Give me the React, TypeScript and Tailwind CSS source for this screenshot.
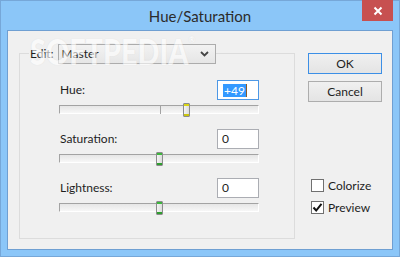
import React from "react";

const font = { fontFamily: 'Lato, "Noto Sans", Arial, sans-serif' };

function Slider({ pos, cap, tick }: { pos: number; cap: "yellow" | "green"; tick?: boolean }) {
  return (
    <div className="relative mt-[5px] h-[9px] w-[200px] border-l border-t border-[#a3a3a3] border-b-white border-r-white border-b border-r bg-gradient-to-b from-[#e6e6e6] to-[#f7f7f7]">
      {tick && <div className="absolute left-[100px] top-0 h-[8px] w-px bg-[#a3a3a3]" />}
      <div
        className="absolute top-[-3px] flex h-[14px] w-[7px] flex-col justify-between rounded-[1px] border border-[#8c8c8c] bg-gradient-to-r from-[#f4f4f4] to-[#dcdcdc]"
        style={{ left: pos - 4 }}
      >
        <div className={cap === "yellow" ? "h-[2px] bg-[#d8d414]" : "h-[2px] bg-[#3db53d]"} />
        <div className={cap === "yellow" ? "h-[2px] bg-[#c9c40f]" : "h-[2px] bg-[#2f9e2f]"} />
      </div>
    </div>
  );
}

function Row({
  label,
  value,
  pos,
  cap,
  tick,
  focused,
}: {
  label: string;
  value: string;
  pos: number;
  cap: "yellow" | "green";
  tick?: boolean;
  focused?: boolean;
}) {
  return (
    <div className="flex flex-col">
      <div className="flex h-[20px] w-[200px] items-center justify-between">
        <span className="pl-[1px]">{label}</span>
        <div
          className={
            focused
              ? "flex h-[20px] w-[42px] items-center border border-[#4d98e6] bg-white pl-[5px]"
              : "flex h-[20px] w-[42px] items-center border border-[#abadb3] bg-white pl-[4px]"
          }
        >
          {focused ? (
            <span className="flex items-center">
              <span className="bg-[#3399ff] px-[1px] leading-[13px] text-white">{value}</span>
              <span className="h-[13px] w-px bg-[#8a5a2a]" />
            </span>
          ) : (
            <span>{value}</span>
          )}
        </div>
      </div>
      <Slider pos={pos} cap={cap} tick={tick} />
    </div>
  );
}

function Check({ label, checked }: { label: string; checked?: boolean }) {
  return (
    <div className="flex h-[13px] items-center gap-[4px]">
      <div className="flex h-[13px] w-[13px] items-center justify-center border border-[#707070] bg-white">
        {checked && (
          <svg width="11" height="11" viewBox="0 0 11 11">
            <path d="M1.5 5.5 L4.2 8.5 L9.5 1.8" fill="none" stroke="#111" strokeWidth="2" />
          </svg>
        )}
      </div>
      <span>{label}</span>
    </div>
  );
}

export default function App() {
  return (
    <div
      className="flex h-[257px] w-[400px] flex-col border border-[#76a7d8] bg-[#8bc6f8] text-[12px] text-[#1e1e1e]"
      style={font}
    >
      {/* title bar */}
      <div className="relative flex h-[29px] shrink-0 items-center justify-center">
        <span className="pt-[1px] text-[15px] text-[#2b2b2b]">Hue/Saturation</span>
        <div className="absolute right-[6px] top-[-1px] flex h-[21px] w-[31px] items-center justify-center bg-[#c75050]">
          <svg width="10" height="10" viewBox="0 0 10 10">
            <path d="M1.5 1.5 L8.5 8.5 M8.5 1.5 L1.5 8.5" stroke="white" strokeWidth="2" />
          </svg>
        </div>
      </div>

      {/* client area */}
      <div className="relative mx-[6px] flex h-[220px] border border-[#6f9fd2] bg-[#f0f0f0]">
        <div className="ml-[11px] mt-[22px] flex h-[186px] w-[276px] flex-col border border-[#dcdcdc]">
          <div className="-mt-[10px] ml-[9px] flex items-center">
            <span className="bg-[#f0f0f0] pl-[1px] pr-[4px]">Edit:</span>
            <div className="flex h-[20px] w-[158px] items-center justify-between border border-[#acacac] bg-gradient-to-b from-[#f2f2f2] to-[#e6e6e6] pl-[3px] pr-[6px]">
              <span>Master</span>
              <svg width="9" height="6" viewBox="0 0 9 6">
                <path d="M1 1 L4.5 4.5 L8 1" fill="none" stroke="#444" strokeWidth="1.8" />
              </svg>
            </div>
          </div>

          <div className="ml-[39px] mt-[16px] flex flex-col gap-[15px]">
            <Row label="Hue:" value="+49" pos={127} cap="yellow" tick focused />
            <Row label="Saturation:" value="0" pos={100} cap="green" />
            <Row label="Lightness:" value="0" pos={100} cap="green" />
          </div>
        </div>

        <div className="ml-[13px] mt-[22px] flex w-[74px] flex-col">
          <button className="flex h-[21px] w-[74px] items-center justify-center border border-[#3c8fe6] bg-gradient-to-b from-[#f0f0f0] to-[#e4e4e4]">
            OK
          </button>
          <button className="mt-[7px] flex h-[21px] w-[74px] items-center justify-center border border-[#adadad] bg-gradient-to-b from-[#f0f0f0] to-[#e4e4e4]">
            Cancel
          </button>
          <div className="ml-[3px] mt-[77px] flex flex-col gap-[9px]">
            <Check label="Colorize" />
            <Check label="Preview" checked />
          </div>
        </div>

        {/* watermark, faint overlay */}
        <div className="pointer-events-none absolute left-[22px] top-[2px] flex origin-left scale-x-[0.8] items-start text-[36px] font-black leading-none text-white opacity-60 [text-shadow:0_0_1px_#cfcfcf]">
          SOFTPEDIA<span className="mt-[1px] text-[10px]">®</span>
        </div>
      </div>
    </div>
  );
}
